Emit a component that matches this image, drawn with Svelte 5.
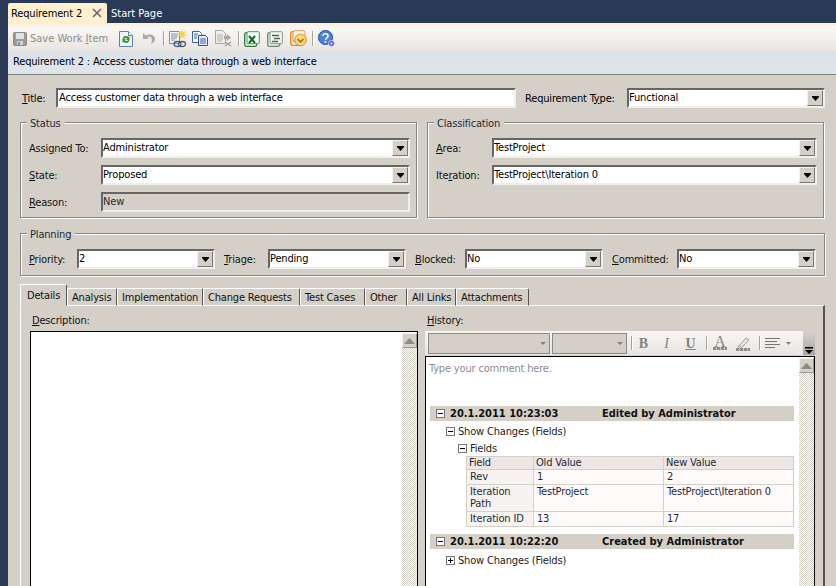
<script lang="ts">
	const tabs = [
		{ name: 'Analysis', width: 50 },
		{ name: 'Implementation', width: 86 },
		{ name: 'Change Requests', width: 97 },
		{ name: 'Test Cases', width: 65 },
		{ name: 'Other', width: 42 },
		{ name: 'All Links', width: 49 },
		{ name: 'Attachments', width: 73 }
	];
	const changes = [
		{ field: ['Rev'], old: '1', next: '2' },
		{ field: ['Iteration', 'Path'], old: 'TestProject', next: 'TestProject\\Iteration 0' },
		{ field: ['Iteration ID'], old: '13', next: '17' }
	];
</script>

{#snippet arrow()}
	<span class="drop"><svg width="9" height="5" viewBox="0 0 9 5" aria-hidden="true"><path d="M1 0h7v1L4.5 5 1 1z" fill="#000" /></svg></span>
{/snippet}

{#snippet scrollbar()}
	<div class="scrollbar">
		<span class="scroll-btn"><svg width="11" height="6" viewBox="0 0 11 6" aria-hidden="true"><path d="M5.5 0 11 6H0z" fill="#8c8a85" /></svg></span>
	</div>
{/snippet}

{#snippet treeBox(open: boolean)}
	<svg class="tree-box" width="9" height="9" viewBox="0 0 9 9" aria-hidden="true">
		<rect x=".5" y=".5" width="8" height="8" fill="#fff" stroke="#777" />
		<path d="M2 4.5h5" stroke="#000" />
		{#if !open}<path d="M4.5 2v5" stroke="#000" />{/if}
	</svg>
{/snippet}

<div class="window">
	<div class="doc-tabs">
		<div class="doc-tab active">
			<span>Requirement 2</span>
			<svg width="10" height="10" viewBox="0 0 10 10" aria-hidden="true"><path d="M1 1l8 8M9 1 1 9" stroke="#6f675c" stroke-width="1.6" /></svg>
		</div>
		<div class="doc-tab">Start Page</div>
	</div>

	<div class="main">
		<div class="toolbar">
			<svg class="ico save" width="14" height="14" viewBox="0 0 14 14" aria-hidden="true">
				<rect x=".5" y=".5" width="13" height="13" rx="1" fill="#9a9a9a" stroke="#8a8a8a" />
				<rect x="3" y="1" width="8" height="6" fill="#e2e2e2" />
				<rect x="4" y="9" width="6" height="4" fill="#d4d4d4" />
				<rect x="5" y="10" width="2" height="3" fill="#888" />
			</svg>
			<span class="save-label">Save Work <u>I</u>tem</span>
			<svg class="ico refresh" width="14" height="16" viewBox="0 0 14 16" aria-hidden="true">
				<path d="M.5.5h9l4 4v11H.5z" fill="#eef3fb" stroke="#5f7fb0" />
				<path d="M9.5.5v4h4" fill="#fff" stroke="#5f7fb0" />
				<path d="M3.5 8a3.5 3.5 0 0 1 6-2l1-1v4H7l1.2-1.2A2 2 0 0 0 5 8z" fill="#3f9a2c" />
				<path d="M10.5 9a3.5 3.5 0 0 1-6 2l-1 1V8h3.5l-1.2 1.2A2 2 0 0 0 9 9z" fill="#3f9a2c" />
			</svg>
			<svg class="ico undo" width="14" height="13" viewBox="0 0 14 13" aria-hidden="true">
				<path d="M1 1v6h6L5 5c3-1 5 0 5 3 0 2-1 3-2 4 3-.5 5-2.500 5-5 0-4-5-6-9.500-3.500z" fill="#a9a8a5" />
			</svg>
			<span class="sep first"></span>
			<svg class="ico link" width="18" height="19" viewBox="0 0 18 19" aria-hidden="true">
				<path d="M.5 2.500h10v12H.5z" fill="#f3f5fa" stroke="#7d8cab" />
				<path d="M2 5h7M2 7h7M2 9h6M2 11h4" stroke="#7d8cab" />
				<path d="M13 0l1 3 3-1-2 3 3 1-3 1 1 3-3-2-2 2V7L8 6l3-1-1-3 2 1z" fill="#f4d350" />
				<ellipse cx="8.500" cy="15" rx="3.500" ry="2.500" fill="none" stroke="#4a5a78" stroke-width="1.300" />
				<ellipse cx="13" cy="15" rx="3.500" ry="2.500" fill="none" stroke="#4a5a78" stroke-width="1.300" />
			</svg>
			<svg class="ico copy" width="16" height="15" viewBox="0 0 16 15" aria-hidden="true">
				<path d="M.5.5h7l2 2v9H.5z" fill="#fff" stroke="#3a62b0" />
				<path d="M6.500 4.500h7l2 2v8h-9z" fill="#e9f0fc" stroke="#2b54a6" />
				<path d="M8 8h6M8 10h6M8 12h6M2 3h4M2 5h3M2 7h3" stroke="#3a62b0" />
			</svg>
			<svg class="ico disabled" width="18" height="17" viewBox="0 0 18 17" aria-hidden="true">
				<path d="M.5.500h7l3 3v10H.5z" fill="#efeeec" stroke="#a8a6a2" />
				<path d="M2 5h6M2 7h6M2 9h6M2 11h5" stroke="#b0aeaa" />
				<path d="M9 6h3V4l4 3.500L12 11V9H9z" fill="#a9a8a5" />
				<path d="M10 12l6 4M16 12l-6 4" stroke="#a2a09c" stroke-width="1.500" />
			</svg>
			<span class="sep"></span>
			<svg class="ico excel" width="16" height="16" viewBox="0 0 16 16" aria-hidden="true">
				<rect x=".7" y="1.700" width="12" height="13.600" rx="1.500" fill="#f0f7ee" stroke="#2d7a3a" stroke-width="1.300" />
				<rect x="3" y="0.700" width="12.300" height="12" rx="1" fill="#f6faf4" stroke="#4e9455" />
				<path d="M5 5l6 7M11 5l-6 7" stroke="#14692a" stroke-width="2" />
			</svg>
			<svg class="ico project" width="16" height="16" viewBox="0 0 16 16" aria-hidden="true">
				<rect x=".7" y="1.700" width="12" height="13.600" rx="1.500" fill="#eef2ec" stroke="#6d8370" stroke-width="1.300" />
				<rect x="3" y="0.700" width="12.300" height="12" rx="1" fill="#f6f8f4" stroke="#7f9682" />
				<path d="M5 4.500h7M7 7.500h6M5 10.500h6" stroke="#3d6b45" stroke-width="1.600" />
			</svg>
			<svg class="ico outlook" width="17" height="17" viewBox="0 0 17 17" aria-hidden="true">
				<rect x=".7" y="1.700" width="12" height="13.600" rx="2" fill="#fbe6cf" stroke="#dd8531" stroke-width="1.300" />
				<rect x="3" y="0.700" width="12" height="11" rx="2" fill="#fdf2e2" stroke="#e39a4c" />
				<circle cx="10.500" cy="10" r="5.800" fill="#fbd877" stroke="#d68a2a" />
				<path d="M7.500 9l3 3 3-3" fill="none" stroke="#a86412" stroke-width="1.500" />
			</svg>
			<span class="sep"></span>
			<svg class="ico help" width="18" height="18" viewBox="0 0 18 18" aria-hidden="true">
				<circle cx="7.500" cy="7.500" r="7" fill="#4c82d8" stroke="#1f4ea3" />
				<path d="M5 6c0-3 5-3 5 0 0 2-2.500 2-2.500 4" fill="none" stroke="#fff" stroke-width="1.600" />
				<circle cx="7.500" cy="12" r="1" fill="#fff" />
				<circle cx="13.500" cy="13.500" r="3" fill="#5a5ad0" stroke="#fff" stroke-width=".6" />
				<circle cx="13.500" cy="13.500" r="1" fill="#fff" />
			</svg>
		</div>

		<div class="heading">Requirement 2 : Access customer data through a web interface</div>

		<div class="form">
			<div class="title-row">
				<span class="title-label"><u>T</u>itle:</span>
				<div class="field title-field"><span>Access customer data through a web interface</span></div>
				<span class="type-label">Requirement T<u>y</u>pe:</span>
				<div class="field type-field"><span>Functional</span>{@render arrow()}</div>
			</div>

			<div class="two-groups">
				<section class="group">
					<span class="caption">Status</span>
					<div class="rows">
						<div class="row"><span class="lbl status-lbl">Assi<u>g</u>ned To:</span><div class="field grow"><span>Administrator</span>{@render arrow()}</div></div>
						<div class="row"><span class="lbl status-lbl"><u>S</u>tate:</span><div class="field grow"><span>Proposed</span>{@render arrow()}</div></div>
						<div class="row"><span class="lbl status-lbl"><u>R</u>eason:</span><div class="field grow readonly"><span>New</span></div></div>
					</div>
				</section>
				<section class="group">
					<span class="caption">Classification</span>
					<div class="rows">
						<div class="row"><span class="lbl class-lbl"><u>A</u>rea:</span><div class="field grow"><span>TestProject</span>{@render arrow()}</div></div>
						<div class="row"><span class="lbl class-lbl">Ite<u>r</u>ation:</span><div class="field grow"><span>TestProject\Iteration 0</span>{@render arrow()}</div></div>
					</div>
				</section>
			</div>

			<section class="group planning">
				<span class="caption">Planning</span>
				<div class="plan-row">
					<span class="lbl" style:width="48px"><u>P</u>riority:</span>
					<div class="field plan-field"><span>2</span>{@render arrow()}</div>
					<span class="lbl" style:width="44px"><u>T</u>riage:</span>
					<div class="field plan-field"><span>Pending</span>{@render arrow()}</div>
					<span class="lbl" style:width="50px"><u>B</u>locked:</span>
					<div class="field plan-field"><span>No</span>{@render arrow()}</div>
					<span class="lbl" style:width="65px"><u>C</u>ommitted:</span>
					<div class="field plan-field wide"><span>No</span>{@render arrow()}</div>
				</div>
			</section>

			<div class="tabs">
				<div class="tab active">Details</div>
				{#each tabs as tab}
					<div class="tab" style:width="{tab.width}px">{tab.name}</div>
				{/each}
			</div>

			<div class="panel">
				<div class="col desc-col">
					<span class="col-label"><u>D</u>escription:</span>
					<div class="box desc-box">
						<div class="box-body"></div>
						{@render scrollbar()}
					</div>
				</div>

				<div class="col hist-col">
					<span class="col-label"><u>H</u>istory:</span>
					<div class="rich-bar">
						<span class="combo font-combo"><i></i></span>
						<span class="combo size-combo"><i></i></span>
						<span class="rb-sep"></span>
						<b class="fmt bold">B</b>
						<em class="fmt italic">I</em>
						<u class="fmt under">U</u>
						<span class="rb-sep"></span>
						<span class="color-ico">
							<span class="big-a">A</span>
							<span class="swatch"></span>
						</span>
						<span class="color-ico eraser">
							<svg width="16" height="12" viewBox="0 0 16 12" aria-hidden="true"><path d="M3 11 11 2l3 2-7 7z" fill="#eceae7" stroke="#9b9996" /></svg>
							<span class="swatch"></span>
						</span>
						<span class="rb-sep"></span>
						<svg class="align" width="15" height="11" viewBox="0 0 15 11" aria-hidden="true"><path d="M0 .5h15M0 3.500h12M0 6.500h15M0 9.500h10" stroke="#77756f" /></svg>
						<svg class="caret" width="5" height="3" viewBox="0 0 5 3" aria-hidden="true"><path d="M0 0h5L2.500 3z" fill="#85837e" /></svg>
						<span class="overflow">
							<svg width="8" height="7" viewBox="0 0 8 7" aria-hidden="true"><path d="M0 0h8v1.500H0zM0 3h8L4 7z" fill="#000" /></svg>
						</span>
					</div>
					<div class="box hist-box">
						<div class="box-body hist-body">
							<div class="placeholder">Type your comment here.</div>
							<div class="rev-bar first-rev">{@render treeBox(true)}<span class="rev-date">20.1.2011 10:23:03</span><span>Edited by Administrator</span></div>
							<div class="show-changes">{@render treeBox(true)}<span>Show Changes (Fields)</span></div>
							<div class="fields-head">{@render treeBox(true)}<span>Fields</span></div>
							<table>
								<thead><tr><th>Field</th><th>Old Value</th><th>New Value</th></tr></thead>
								<tbody>
									{#each changes as c}
										<tr>
											<td class="name">{#each c.field as line}<div>{line}</div>{/each}</td>
											<td>{c.old}</td>
											<td>{c.next}</td>
										</tr>
									{/each}
								</tbody>
							</table>
							<div class="rev-bar">{@render treeBox(true)}<span class="rev-date">20.1.2011 10:22:20</span><span>Created by Administrator</span></div>
							<div class="show-changes closed">{@render treeBox(false)}<span>Show Changes (Fields)</span></div>
						</div>
						{@render scrollbar()}
					</div>
				</div>
			</div>
		</div>
	</div>
</div>

<style>
	:global(body) {
		margin: 0;
		background: #2a3a56;
	}

	.window {
		display: flex;
		flex-direction: column;
		width: 836px;
		height: 586px;
		overflow: hidden;
		background: #2a3a56;
		font-family: 'DejaVu Sans Condensed', 'DejaVu Sans', sans-serif;
		font-stretch: condensed;
		font-size: 11px;
		line-height: 13px;
		letter-spacing: -0.17px;
		color: #000;
	}

	.doc-tabs {
		display: flex;
		flex: none;
		height: 23px;
		padding-left: 8px;
		align-items: flex-end;
		letter-spacing: 0;
	}

	.doc-tab {
		display: flex;
		align-items: center;
		height: 20px;
		padding: 0 4px 0 4px;
		color: #fff;
		white-space: nowrap;
	}

	.doc-tab.active {
		gap: 10px;
		width: 99px;
		box-sizing: border-box;
		padding-left: 3px;
		padding-right: 0;
		border-radius: 2px 2px 0 0;
		background: #fff0cf;
		color: #000;
		letter-spacing: -0.15px;
	}

	.main {
		display: flex;
		flex: 1;
		min-height: 0;
		flex-direction: column;
		margin-left: 8px;
		background: #d4d0c8;
	}

	.toolbar {
		display: flex;
		flex: none;
		align-items: center;
		height: 25px;
		padding-left: 5px;
		border-top: 3px solid #fff0d2;
		background: linear-gradient(#faf8f6, #e9e5e1);
		color: #8d8b87;
	}

	.ico {
		flex: none;
	}

	.save-label {
		flex: none;
		width: 89px;
		margin-left: 3px;
		letter-spacing: 0;
	}

	.undo {
		margin-left: 9px;
	}

	.sep {
		flex: none;
		width: 1px;
		height: 15px;
		margin: 0 5px 0 5px;
		background: #a5a29c;
		box-shadow: 1px 0 0 #fff;
	}

	.sep.first {
		margin-left: 7px;
	}

	.copy {
		margin-left: 5px;
	}

	.disabled {
		margin-left: 7px;
	}

	.project,
	.outlook {
		margin-left: 7px;
	}

	.heading {
		flex: none;
		height: 23px;
		padding-left: 5px;
		line-height: 22px;
		border-bottom: 1px solid #7c7c78;
		background: linear-gradient(#dbe2e7, #e0e5ea);
	}

	.form {
		display: flex;
		flex: 1;
		min-height: 0;
		flex-direction: column;
		padding: 13px 11px 0 12px;
	}

	.title-row {
		display: flex;
		flex: none;
		align-items: center;
		height: 20px;
	}

	.title-label {
		width: 36px;
		padding-left: 2px;
		box-sizing: border-box;
	}

	.title-field {
		flex: 1;
		padding-left: 1px;
	}

	.type-label {
		flex: none;
		width: 111px;
		padding-left: 9px;
		box-sizing: border-box;
	}

	.type-field {
		flex: none;
		width: 198px;
	}

	.field {
		display: flex;
		align-items: center;
		box-sizing: border-box;
		height: 20px;
		border: 2px solid;
		border-color: #666 #f1efeb #f1efeb #666;
		background: #fff;
	}

	.field > span:first-child {
		flex: 1;
		margin-top: -2px;
		white-space: nowrap;
	}

	.field.readonly {
		background: #d4d0c8;
		color: #1c2a35;
	}

	.grow {
		flex: 1;
	}

	.drop {
		display: flex;
		flex: none;
		align-items: center;
		justify-content: center;
		width: 16px;
		height: 16px;
		box-sizing: border-box;
		border: 1px solid;
		border-color: #f4f2ee #777 #777 #f4f2ee;
		background: #d4d0c8;
	}

	.two-groups {
		display: grid;
		flex: none;
		grid-template-columns: 397px 397px;
		gap: 10px;
		margin-top: 14px;
		height: 96px;
	}

	.group {
		position: relative;
		box-sizing: border-box;
		border: 1px solid #86847f;
		box-shadow: 1px 1px 0 #fff, inset 1px 1px 0 #fff;
	}

	.caption {
		position: absolute;
		top: -6px;
		left: 6px;
		padding: 0 4px 0 3px;
		background: #d4d0c8;
		color: #1c2a35;
	}

	.rows {
		display: flex;
		flex-direction: column;
		gap: 7px;
		padding: 15px 6px 0 8px;
	}

	.row {
		display: flex;
		align-items: center;
	}

	.lbl {
		flex: none;
		box-sizing: border-box;
		margin-top: 1px;
		color: #111;
	}

	.status-lbl {
		width: 72px;
	}

	.class-lbl {
		width: 56px;
	}

	.planning {
		flex: none;
		height: 43px;
		margin-top: 15px;
	}

	.plan-row {
		display: flex;
		align-items: center;
		padding: 15px 0 0 8px;
	}

	.plan-field {
		flex: none;
		width: 138px;
		margin-right: 9px;
	}

	.plan-field.wide {
		width: 139px;
		margin-right: 0;
	}

	.tabs {
		display: flex;
		flex: none;
		align-items: flex-end;
		height: 22px;
		margin-top: 8px;
		position: relative;
		z-index: 1;
		margin-bottom: -1px;
	}

	.tab {
		box-sizing: border-box;
		height: 18px;
		padding: 2px 0 0 4px;
		white-space: nowrap;
		border-top: 1px solid #fff;
		border-left: 1px solid #fff;
		border-right: 1px solid #555;
		border-radius: 2px 2px 0 0;
		border-bottom: 1px solid #fff;
		color: #111;
	}

	.tab.active {
		width: 47px;
		height: 22px;
		padding-top: 4px;
		padding-left: 6px;
		border-bottom-color: #d4d0c8;
	}

	.panel {
		display: flex;
		flex: 1;
		min-height: 0;
		box-sizing: border-box;
		padding-left: 9px;
		border-top: 1px solid #fff;
		border-left: 1px solid #fff;
		border-right: 2px solid #55554f;
	}

	.col {
		display: flex;
		flex-direction: column;
		min-height: 0;
	}

	.col-label {
		flex: none;
		height: 25px;
		padding-top: 8px;
		padding-left: 2px;
		box-sizing: border-box;
		color: #111;
	}

	.desc-col {
		width: 388px;
	}

	.hist-col {
		width: 390px;
		margin-left: 7px;
	}

	.box {
		display: flex;
		flex: 1;
		min-height: 0;
		border: 1px solid #000;
		border-bottom: 0;
		background: #fff;
	}

	.box-body {
		flex: 1;
		min-width: 0;
	}

	.scrollbar {
		flex: none;
		width: 15px;
		margin: 1px 0 0 0;
		background: repeating-conic-gradient(#d4d0c8 0 25%, #fff 0 50%) 0 0 / 2px 2px;
	}

	.scroll-btn {
		display: flex;
		align-items: center;
		justify-content: center;
		box-sizing: border-box;
		height: 15px;
		border: 1px solid;
		border-color: #f4f2ee #999 #999 #f4f2ee;
		background: #d4d0c8;
	}

	.rich-bar {
		display: flex;
		flex: none;
		position: relative;
		align-items: center;
		height: 24px;
		padding-left: 3px;
		margin-bottom: 1px;
		background: linear-gradient(#f8f6f4, #e9e4e1);
		color: #85837e;
	}

	.combo {
		position: relative;
		flex: none;
		box-sizing: border-box;
		height: 21px;
		border: 1px solid #8a8a86;
		background: #d4d0c8;
	}

	.combo i {
		position: absolute;
		right: 3px;
		top: 8px;
		border: 3px solid transparent;
		border-top: 3px solid #85837e;
	}

	.font-combo {
		width: 122px;
		margin-right: 2px;
	}

	.size-combo {
		width: 75px;
	}

	.rb-sep {
		flex: none;
		width: 1px;
		height: 14px;
		background: #a5a29c;
		box-shadow: 1px 0 0 #fff;
	}

	.rich-bar > .rb-sep:nth-of-type(3) {
		margin-left: 4px;
	}

	.fmt {
		flex: none;
		width: 11px;
		margin-left: 7px;
		font-family: 'Liberation Serif', serif;
		font-size: 14px;
		text-align: center;
		font-stretch: normal;
		letter-spacing: 0;
	}

	.bold {
		font-weight: 700;
		margin-left: 6px;
	}

	.italic {
		margin-left: 12px;
	}

	.under {
		margin-left: 13px;
		font-weight: 700;
		margin-right: 10px;
	}

	.color-ico {
		display: flex;
		flex: none;
		flex-direction: column;
		align-items: center;
		width: 16px;
		margin-left: 5px;
	}

	.big-a {
		font-family: 'Liberation Serif', serif;
		font-size: 16px;
		line-height: 11px;
		font-weight: 400;
		font-stretch: normal;
	}

	.swatch {
		width: 14px;
		height: 3px;
		background: repeating-linear-gradient(90deg, #8f8d88 0 3px, #c9c6c0 3px 4px);
	}

	.eraser {
		margin-left: 7px;
		margin-right: 8px;
	}

	.align {
		flex: none;
		margin-left: 5px;
	}

	.caret {
		flex: none;
		margin-left: 6px;
	}

	.overflow {
		position: absolute;
		top: 0;
		right: 0;
		bottom: 0;
		display: flex;
		width: 12px;
		align-items: flex-end;
		justify-content: center;
		padding-bottom: 1px;
		box-sizing: border-box;
		background: linear-gradient(#d6d3cf, #a7a5a1);
	}

	.hist-body {
		padding-left: 4px;
		padding-right: 5px;
		overflow: hidden;
	}

	.placeholder {
		margin-top: 5px;
		margin-left: -1px;
		color: #8c8a94;
	}

	.rev-bar {
		display: flex;
		align-items: center;
		height: 15px;
		margin-top: 7px;
		padding-left: 6px;
		background: #d4d0c8;
		font-weight: 700;
		letter-spacing: 0;
		color: #111;
	}

	.first-rev {
		margin-top: 31px;
	}

	.rev-date {
		width: 152px;
		margin-left: 5px;
	}

	.show-changes,
	.fields-head {
		display: flex;
		align-items: center;
		gap: 3px;
		margin-top: 3px;
		padding-left: 16px;
		height: 14px;
		color: #222;
	}

	.show-changes.closed {
		margin-top: 4px;
	}

	.fields-head {
		margin-top: 3px;
		padding-left: 28px;
	}

	table {
		margin-top: 1px;
		margin-left: 36px;
		width: 328px;
		table-layout: fixed;
		border-collapse: collapse;
		color: #1f2a34;
	}

	th,
	td {
		box-sizing: border-box;
		padding: 0 0 0 2px;
		border: 1px solid #d4d0c8;
		text-align: left;
		vertical-align: top;
		font-weight: 400;
		line-height: 12px;
		background: #fffafa;
	}

	td {
		padding: 1px 0 1px 3px;
	}

	th {
		height: 13px;
		background: #ede6e4;
	}

	th:nth-child(1),
	td:nth-child(1) {
		width: 67px;
	}

	th:nth-child(2),
	td:nth-child(2) {
		width: 130px;
	}

	td.name {
		background: #f7f3f1;
	}
</style>
